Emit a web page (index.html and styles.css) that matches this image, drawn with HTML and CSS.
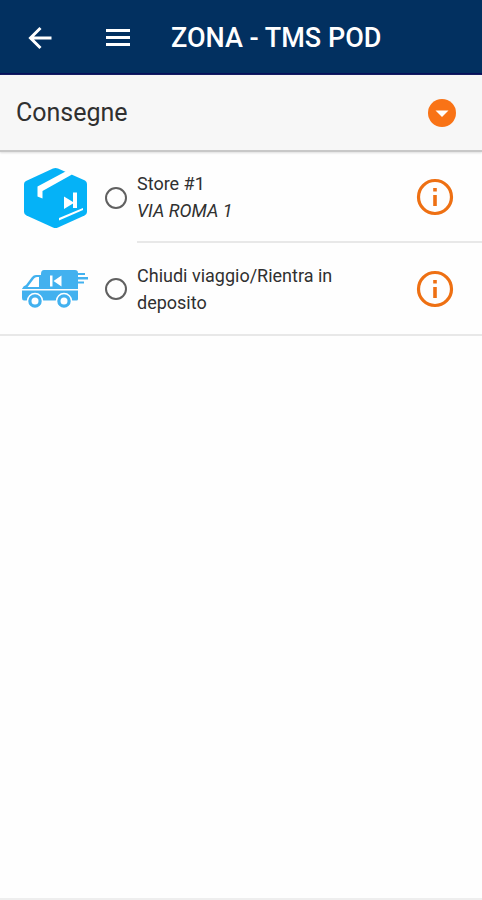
FILE: index.html
```html
<!DOCTYPE html>
<html lang="it">
<head>
<meta charset="utf-8">
<meta name="viewport" content="width=device-width, initial-scale=1">
<title>ZONA - TMS POD</title>
<link rel="stylesheet" href="styles.css">
</head>
<body>
<header class="topbar">
  <button class="icon-button" type="button" aria-label="Indietro">
    <svg width="24" height="24" viewBox="0 0 24 24" fill="none" stroke="#fff" stroke-width="3"><path d="M23.500 12H3M12.500 2L2.500 12L12.500 22"/></svg>
  </button>
  <button class="icon-button" type="button" aria-label="Menu">
    <svg width="26" height="20" viewBox="0 0 26 20" fill="#fff"><path d="M1 1h24v3H1zM1 8h24v3H1zM1 15h24v3H1z"/></svg>
  </button>
  <h1 class="title">ZONA - TMS POD</h1>
</header>
<main class="content">
  <div class="section">
    <h2 class="section-title">Consegne</h2>
    <button class="icon-button" type="button" aria-label="Espandi consegne">
      <svg width="28" height="28" viewBox="0 0 28 28"><circle cx="14" cy="14" r="14" fill="#f97316"/><path d="M7.500 11.500h13L14 18z" fill="#fff"/></svg>
    </button>
  </div>
  <ul class="list">
    <li class="row">
      <svg class="picture" width="68" height="64" viewBox="0 0 68 64" aria-hidden="true">
        <path d="M32 2.500Q34.500 1.500 37 2.500L64 14.500Q66 15.500 66 18V46Q66 48 63.500 49.500L37 61.500Q34.500 62.500 32 61.500L5.500 49.500Q3 48 3 46V18Q3 16 5 15Z" fill="#05b2f7"/>
        <path d="M16.500 20.500L45.500 5L51 8.500L21.500 25V32.500L16.500 30.500Z" fill="#fff"/>
        <path d="M43 30.500L52 36V26.500H56V42H52V37.500L43 43Z" fill="#fff"/>
        <path d="M38 52L62 42V44L38 54.500Z" fill="#fff"/>
      </svg>
      <input class="radio" type="radio" name="tappa" id="store">
      <div class="row-body inset">
        <label class="text" for="store">Store #1<br><em>VIA ROMA 1</em></label>
        <button class="icon-button" type="button" aria-label="Informazioni Store #1">
          <svg width="38" height="38" viewBox="0 0 38 38"><circle cx="19" cy="19" r="16.500" fill="none" stroke="#ee7013" stroke-width="3.200"/><path d="M17.200 10h3.600v3.500h-3.600zM17.200 17h3.600v11h-3.600z" fill="#ee7013"/></svg>
        </button>
      </div>
    </li>
    <li class="row last">
      <svg class="picture" width="68" height="64" viewBox="0 0 68 64" aria-hidden="true">
        <path d="M20 17Q20 13 23 13H54Q57 13 57 16H64V18H57V20H67V22.500H57V24.500H63V26.500H57V32H1Q2 29 5 28L11 20Q12.500 18 15 18H20Z" fill="#42b1ef"/>
        <path d="M7 29.500L13 21.500Q14 20 16 20H18V30H6.500Z" fill="#fff"/>
        <path d="M1 33.500H57V42Q57 43.500 55.500 43.500H3Q1 43.500 1 41Z" fill="#42b1ef"/>
        <path d="M29 18.500H31.500V29.500H29ZM40.500 18.500V29.500L32.500 24Z" fill="#fff"/>
        <g fill="#42b1ef" stroke="#fff" stroke-width="1.500"><circle cx="14" cy="44" r="7.500"/><circle cx="43" cy="44" r="7.500"/></g>
        <g fill="#fff"><circle cx="14" cy="44" r="3.500"/><circle cx="43" cy="44" r="3.500"/></g>
      </svg>
      <input class="radio" type="radio" name="tappa" id="deposito">
      <div class="row-body">
        <label class="text" for="deposito">Chiudi viaggio/Rientra in deposito</label>
        <button class="icon-button" type="button" aria-label="Informazioni rientro">
          <svg width="38" height="38" viewBox="0 0 38 38"><circle cx="19" cy="19" r="16.500" fill="none" stroke="#ee7013" stroke-width="3.200"/><path d="M17.200 10h3.600v3.500h-3.600zM17.200 17h3.600v11h-3.600z" fill="#ee7013"/></svg>
        </button>
      </div>
    </li>
  </ul>
</main>
</body>
</html>
```
FILE: styles.css
```css
* { box-sizing: border-box; }

body {
  margin: 0;
  min-height: 100vh;
  display: flex;
  flex-direction: column;
  background: #fefefe;
  color: #303030;
  font-family: Roboto, "Liberation Sans", sans-serif;
  border-bottom: 2px solid #eee;
}

.topbar {
  display: flex;
  align-items: center;
  height: 75px;
  padding: 3px 28px 0;
  background: #023060;
  border-bottom: 2px solid #06105a;
  color: #fff;
}

.icon-button {
  display: flex;
  flex: none;
  padding: 0;
  border: 0;
  background: none;
}

.topbar .icon-button + .icon-button { margin-left: 53px; }

.title {
  margin: 0 0 0 40px;
  font-size: 27px;
  line-height: 32px;
  font-weight: 500;
}

.content { flex: 1; }

.section {
  display: flex;
  align-items: center;
  justify-content: space-between;
  height: 77px;
  padding: 0 26px 0 16px;
  background: #f7f7f7;
  border-bottom: 2px solid #c8c8c8;
  box-shadow: 0 1px 2px #ddd;
}

.section-title {
  margin: 0;
  font-size: 25px;
  line-height: 32px;
  font-weight: 400;
}

.list {
  margin: 0;
  padding: 0;
  list-style: none;
}

.row {
  display: flex;
  align-items: center;
  padding-left: 21px;
}

.last { border-bottom: 2px solid #e8e8e8; }

.picture { flex: none; }

.radio {
  appearance: none;
  flex: none;
  width: 22px;
  height: 22px;
  margin: 0 10px 0 16px;
  border: 2px solid #606060;
  border-radius: 50%;
}

.row-body {
  display: flex;
  flex: 1;
  align-items: center;
  justify-content: space-between;
  min-height: 91px;
  padding-right: 28px;
}

.inset { border-bottom: 2px solid #e8e8e8; }

.text {
  max-width: 220px;
  font-size: 18px;
  line-height: 27px;
}
```
